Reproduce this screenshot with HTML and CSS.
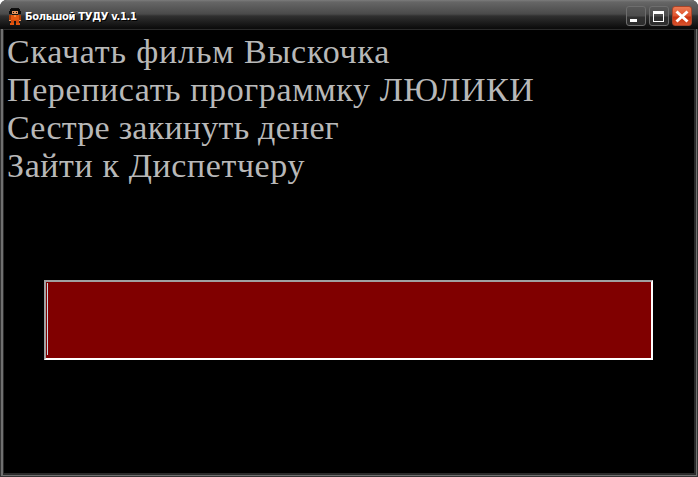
FILE: index.html
```html
<!DOCTYPE html>
<html lang="ru">

<head>
    <meta charset="UTF-8">
    <link rel="stylesheet" href="styles.css">
    <title>Большой ТУДУ v.1.1</title>
</head>

<body>

    <div class="window">
        <div class="titleBar">
            <svg class="appIcon" width="14" height="17" viewBox="0 0 14 17" shape-rendering="crispEdges">
                <rect x="3" y="0" width="8" height="1" fill="#111"/>
                <rect x="2" y="1" width="10" height="3" fill="#0c0c0c"/>
                <rect x="1" y="3" width="12" height="3" fill="#0c0c0c"/>
                <rect x="4" y="3" width="6" height="3" fill="#e8925a"/>
                <rect x="5" y="4" width="1" height="1" fill="#111"/>
                <rect x="8" y="4" width="1" height="1" fill="#111"/>
                <rect x="4" y="6" width="6" height="1" fill="#111"/>
                <rect x="3" y="7" width="8" height="5" fill="#e4560f"/>
                <rect x="1" y="7" width="2" height="5" fill="#a83c08"/>
                <rect x="11" y="7" width="2" height="5" fill="#a83c08"/>
                <rect x="6" y="7" width="2" height="2" fill="#f28a3c"/>
                <rect x="1" y="12" width="2" height="1" fill="#e8925a"/>
                <rect x="11" y="12" width="2" height="1" fill="#e8925a"/>
                <rect x="3" y="12" width="8" height="3" fill="#d14a0b"/>
                <rect x="6" y="13" width="2" height="2" fill="#111"/>
                <rect x="2" y="15" width="4" height="2" fill="#e4560f"/>
                <rect x="8" y="15" width="4" height="2" fill="#e4560f"/>
            </svg>
            <span class="titleText">Большой ТУДУ v.1.1</span>
            <div class="btns">
                <div class="btn">
                    <svg width="18" height="18" viewBox="0 0 18 18" shape-rendering="crispEdges">
                        <rect x="3" y="12" width="7" height="3" fill="#fff"/>
                    </svg>
                </div>
                <div class="btn">
                    <svg width="18" height="18" viewBox="0 0 18 18" shape-rendering="crispEdges">
                        <rect x="3.5" y="4.5" width="10" height="10" fill="none" stroke="#fff"/>
                        <rect x="3" y="4" width="11" height="3" fill="#fff"/>
                    </svg>
                </div>
                <div class="btn btnClose">
                    <svg width="18" height="18" viewBox="0 0 18 18">
                        <path d="M3.5 4.5 L14.5 14.5 M14.5 4.5 L3.5 14.5" stroke="#fff" stroke-width="3" fill="none"/>
                    </svg>
                </div>
            </div>
        </div>
        <div class="content">
            <ul class="todoList">
                <li>Скачать фильм Выскочка</li>
                <li>Переписать программку ЛЮЛИКИ</li>
                <li>Сестре закинуть денег</li>
                <li>Зайти к Диспетчеру</li>
            </ul>
            <div class="inputBox">
                <div class="caret"></div>
            </div>
        </div>
    </div>

</body>

</html>
```

FILE: styles.css
```css
* {
    margin: 0;
    padding: 0;
    list-style: none;
    box-sizing: border-box;
}

html,
body {
    width: 698px;
    height: 477px;
    overflow: hidden;
    background-color: #fff;
}

.window {
    width: 698px;
    height: 477px;
    display: flex;
    flex-direction: column;
    border-radius: 7px 7px 0 0;
    overflow: hidden;
    background-color: #707070;
    box-shadow: inset 0 0 0 1px #333;
}

.titleBar {
    height: 29px;
    flex-shrink: 0;
    display: flex;
    align-items: flex-start;
    padding: 6px 6px 0 8px;
    background: linear-gradient(#7c7c7c 0, #666 2px, #4a4a4a 14px, #303030 16px, #0c0c0c 28px);
}

.appIcon {
    margin-top: 2px;
}

.titleText {
    margin: 5px 0 0 3px;
    font-family: "DejaVu Sans", sans-serif;
    font-weight: bold;
    font-size: 10px;
    letter-spacing: -0.35px;
    color: #fff;
    text-shadow: 1px 1px 0 #000;
}

.btns {
    margin-left: auto;
    display: flex;
    gap: 3px;
}

.btn {
    width: 20px;
    height: 20px;
    border: 1px solid #6e6e6e;
    border-radius: 3px;
    background: linear-gradient(#585858 0, #4c4c4c 9px, #303030 10px, #2c2c2c 100%);
}

.btn svg {
    display: block;
}

.btnClose {
    border-color: #a8452a;
    background: linear-gradient(#ec7a52 0, #df5430 9px, #c9320f 10px, #d8522c 100%);
}

.content {
    flex: 1;
    margin: 0 2px 2px 3px;
    background-color: #000;
    border: 1px solid #2a2a2a;
    border-width: 1px 2px 2px 1px;
    overflow: hidden;
}

.todoList {
    padding: 3px 0 0 3px;
    font-family: "Liberation Serif", serif;
    font-size: 34px;
    line-height: 38px;
    letter-spacing: 0.6px;
    color: #b8b8b8;
}

.todoList li:nth-child(1) {
    letter-spacing: 0.83px;
}

.todoList li:nth-child(3) {
    letter-spacing: 0.24px;
}

.inputBox {
    width: 609px;
    height: 80px;
    margin: 95px 0 0 40px;
    border: 2px solid;
    border-color: #a0a0a0 #fff #fff #a0a0a0;
    background-color: #800000;
    padding: 1px;
}

.caret {
    width: 1px;
    height: 72px;
    background-color: #c8d8e0;
}
```
